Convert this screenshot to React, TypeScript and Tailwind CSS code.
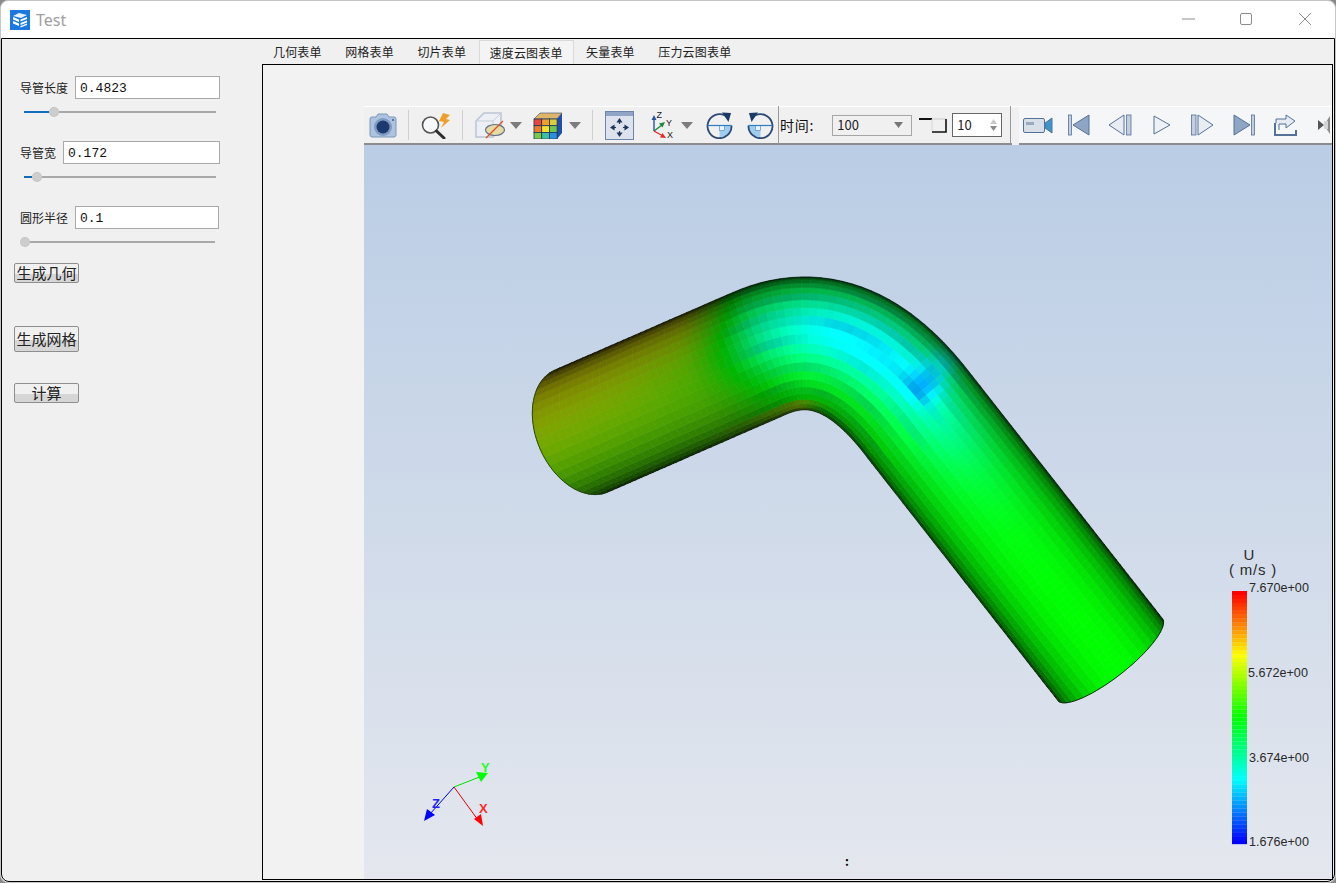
import { ReactNode } from "react";

// ---- tube mesh ----
const clamp = (v: number) => Math.max(0, Math.min(1, v));
const smooth = (a: number, b: number, v: number) => {
  const t = clamp((v - a) / (b - a));
  return t * t * (3 - 2 * t);
};

const P0 = { x: 581.5, y: 431 };
const CORNER = { x: 841.9, y: 317.4 };
const P1 = { x: 1110, y: 659.5 };
const D1 = { x: 0.917, y: -0.4 };
const D2 = { x: 0.617, y: 0.787 };
const RADIUS = 66.5;
const T1 = 90;
const T2 = 118;

const lenA = Math.hypot(CORNER.x - P0.x, CORNER.y - P0.y) - T1;
const A = { x: CORNER.x - D1.x * T1, y: CORNER.y - D1.y * T1 };
const B = { x: CORNER.x + D2.x * T2, y: CORNER.y + D2.y * T2 };
const lenC = Math.hypot(P1.x - CORNER.x, P1.y - CORNER.y) - T2;

// sample the bezier by arc length
const bend: { x: number; y: number; s: number }[] = [];
{
  let s = 0;
  let last = A;
  for (let i = 0; i <= 200; i++) {
    const t = i / 200;
    const x = (1 - t) * (1 - t) * A.x + 2 * t * (1 - t) * CORNER.x + t * t * B.x;
    const y = (1 - t) * (1 - t) * A.y + 2 * t * (1 - t) * CORNER.y + t * t * B.y;
    s += Math.hypot(x - last.x, y - last.y);
    last = { x, y };
    bend.push({ x, y, s });
  }
}
const lenB = bend[200].s;
const TOTAL = lenA + lenB + lenC;

function center(s: number) {
  if (s <= lenA) {
    return { x: A.x - D1.x * (lenA - s), y: A.y - D1.y * (lenA - s), dx: D1.x, dy: D1.y };
  }
  if (s >= lenA + lenB) {
    const r = s - lenA - lenB;
    return { x: B.x + D2.x * r, y: B.y + D2.y * r, dx: D2.x, dy: D2.y };
  }
  const q = s - lenA;
  let i = 1;
  while (i < 200 && bend[i].s < q) i++;
  const a = bend[i - 1];
  const b = bend[i];
  const l = Math.hypot(b.x - a.x, b.y - a.y) || 1;
  return { x: a.x, y: a.y, dx: (b.x - a.x) / l, dy: (b.y - a.y) / l };
}

function point(s: number, th: number) {
  const c = Math.cos(th);
  const shift =
    -45 * c * Math.max(0, 1 - s / 220) + 18 * c * Math.max(0, 1 - (TOTAL - s) / 220);
  const p = center(s + shift);
  const v = Math.sin(th) * RADIUS;
  return { x: p.x + p.dy * v, y: p.y - p.dx * v };
}

function rainbow(x: number) {
  const t = clamp(x);
  const r = clamp(4 * t - 2);
  const g = t < 0.25 ? 4 * t : t > 0.75 ? 4 - 4 * t : 1;
  const b = clamp(2 - 4 * t);
  return [r, g, b];
}

function tubeColor(s: number, th: number, px: number, py: number, seed: number) {
  const v = Math.sin(th);
  const shade = Math.pow(Math.max(Math.cos(th), 0.02), 0.8);
  const sc = lenA + lenB * 0.6;
  const wl = 1 - smooth(lenA - 60, lenA + 20, s);
  const inBend = smooth(lenA - 30, lenA + 10, s) * (1 - smooth(lenA + lenB, lenA + lenB + 60, s));
  const xLeft = Math.max(0.52, 0.67 + 0.1 * v);
  let x = xLeft * wl + 0.5 * (1 - wl);
  x -= 0.27 * Math.exp(-Math.pow((s - sc) / 140, 2)) * Math.exp(-Math.pow((v - 0.25) / 0.65, 2));
  x -= 0.12 * Math.exp(-(Math.pow(px - 925, 2) + Math.pow(py - 385, 2)) / 320);
  x -= 0.1 * Math.exp(-(Math.pow(px - 945, 2) + Math.pow(py - 362, 2)) / 260);
  if (v < -0.85) x += 0.16 * Math.exp(-Math.pow((s - lenA - 25) / 55, 2));
  const light = 0.66 + 0.34 * smooth(lenA - 50, lenA + 60, s);
  const jitter = 1 + inBend * (seed - 0.5) * 0.14;
  const [r, g, b] = rainbow(x + inBend * (seed - 0.5) * 0.03);
  const m = 255 * shade * light * jitter;
  return `rgb(${Math.min(255, Math.round(r * m))},${Math.min(255, Math.round(g * m))},${Math.min(255, Math.round(b * m))})`;
}

const BANDS = 22;
const STEPS = 110;
const quads: { pts: string; fill: string }[] = [];
for (let i = 0; i < STEPS; i++) {
  const s0 = (TOTAL * i) / STEPS;
  const s1 = (TOTAL * (i + 1)) / STEPS;
  for (let j = 0; j < BANDS; j++) {
    const a0 = -Math.PI / 2 + (Math.PI * j) / BANDS;
    const a1 = -Math.PI / 2 + (Math.PI * (j + 1)) / BANDS;
    const p = [point(s0, a0), point(s1, a0), point(s1, a1), point(s0, a1)];
    const cx = (p[0].x + p[2].x) / 2;
    const cy = (p[0].y + p[2].y) / 2;
    const h = Math.abs(Math.sin((Math.floor((i + (j % 2)) / 2) * 12.9898 + j * 78.233) * 43.5453)) % 1;
    quads.push({
      pts: p.map((q) => `${q.x.toFixed(1)},${q.y.toFixed(1)}`).join(" "),
      fill: tubeColor((s0 + s1) / 2, (a0 + a1) / 2, cx, cy, h),
    });
  }
}
const endArc = (s: number) => {
  const out: string[] = [];
  for (let j = 0; j <= 40; j++) {
    const a = -Math.PI / 2 + (Math.PI * j) / 40;
    const p = point(s, a);
    out.push(`${p.x.toFixed(1)},${p.y.toFixed(1)}`);
  }
  return out.join(" ");
};

const legendBands = Array.from({ length: 64 }, (_, i) => {
  const [r, g, b] = rainbow(1 - i / 63);
  return { y: 591 + (i * 253) / 64, fill: `rgb(${r * 255},${g * 255},${b * 255})` };
});

function Scene() {
  return (
    <svg className="absolute inset-0 w-full h-full" viewBox="364 145 968 734">
      {quads.map((q, i) => (
        <polygon key={i} points={q.pts} fill={q.fill} stroke={q.fill} strokeWidth="0.6" />
      ))}
      <polyline points={endArc(0)} fill="none" stroke="#1c3a08" strokeWidth="0.9" />
      <polyline points={endArc(TOTAL)} fill="none" stroke="#04200a" strokeWidth="0.9" />

      {legendBands.map((b, i) => (
        <rect key={i} x="1232" y={b.y} width="15" height="4.1" fill={b.fill} />
      ))}
      <g className="font-['Liberation_Sans',sans-serif]" fill="#2a2a2a">
        <text x="1249" y="560" fontSize="15" textAnchor="middle">U</text>
        <text x="1253" y="575" fontSize="15" textAnchor="middle" letterSpacing="0.8">( m/s )</text>
        <text x="1249" y="592" fontSize="12.6">7.670e+00</text>
        <text x="1248" y="677" fontSize="12.6">5.672e+00</text>
        <text x="1249" y="762" fontSize="12.6">3.674e+00</text>
        <text x="1249" y="846" fontSize="12.6">1.676e+00</text>
      </g>

      <line x1="454" y1="787" x2="482" y2="776" stroke="#00e000" strokeWidth="1" />
      <polygon points="476,772 488,773 481,782" fill="#00ff00" />
      <line x1="454" y1="787" x2="478" y2="820" stroke="#e00000" strokeWidth="1" />
      <polygon points="474,819 481,814 483,826" fill="#ff0000" />
      <line x1="454" y1="787" x2="430" y2="814" stroke="#0000e0" strokeWidth="1" />
      <polygon points="427,809 435,815 424,821" fill="#0000ff" />
      <g className="font-['Liberation_Sans',sans-serif]" fontSize="13" fontWeight="bold">
        <text x="481" y="772" fill="#22ff22">Y</text>
        <text x="479" y="813" fill="#ff2a2a">X</text>
        <text x="432" y="808" fill="#2222ff">Z</text>
      </g>
    </svg>
  );
}

// ---- toolbar icons ----
function Caret({ className }: { className: string }) {
  return (
    <svg className={className} width="12" height="7" viewBox="0 0 12 7">
      <polygon points="0,0 12,0 6,7" fill="#7c7c7c" />
    </svg>
  );
}

function Sep({ className }: { className: string }) {
  return <div className={`w-px h-[30px] bg-[#cfcfcf] ${className}`} />;
}

function CameraIcon() {
  return (
    <svg className="ml-[5px]" width="28" height="25" viewBox="0 0 28 25">
      <path d="M1 6 Q1 4 3 4 H7 L9 1 H18 L20 4 H25 Q27 4 27 6 V22 Q27 24 25 24 H3 Q1 24 1 22 Z" fill="#aec3df" stroke="#7d97bb" />
      <circle cx="14" cy="14" r="9" fill="#7f9bc2" />
      <circle cx="14" cy="14" r="6.5" fill="#1d3a70" />
      <circle cx="24" cy="7" r="1" fill="#3d5b8c" />
    </svg>
  );
}

function SearchIcon() {
  return (
    <svg className="ml-[11px]" width="31" height="27" viewBox="0 0 31 27">
      <circle cx="10.5" cy="13" r="8" fill="#f7f8fa" stroke="#555" strokeWidth="1.6" />
      <line x1="16.5" y1="19" x2="24" y2="26" stroke="#2d2d2d" strokeWidth="3" strokeLinecap="round" />
      <polygon points="23,1 30,3 26,7 30,8 21,16 24,10 19,9" fill="#ee9f2b" />
    </svg>
  );
}

function BoxIcon() {
  return (
    <svg className="ml-[11px]" width="32" height="28" viewBox="0 0 32 28">
      <path d="M2 10 L10 2 H27 V18 L19 26 H2 Z" fill="#eceff4" stroke="#bcc5d3" strokeWidth="1.5" />
      <path d="M2 10 H19 V26 M19 10 L27 2" fill="none" stroke="#c6ced9" />
      <ellipse cx="21" cy="19" rx="9.5" ry="5.5" fill="#e6d9a2" stroke="#5f6f8c" strokeWidth="1.2" />
      <line x1="12" y1="27" x2="29" y2="10" stroke="#d9502a" strokeWidth="1.3" />
    </svg>
  );
}

function ColorCubeIcon() {
  const colors = ["#e8463c", "#f0a030", "#d8cf3a", "#f07a2a", "#f7e02e", "#6cc850", "#7bc84a", "#3cc0a0", "#2a8fe0"];
  return (
    <svg className="ml-[11px]" width="30" height="27" viewBox="0 0 30 27">
      <polygon points="1,7 7,1 29,1 24,7" fill="#e0b46a" stroke="#2c4d6c" strokeWidth="0.6" />
      <polygon points="24,7 29,1 29,21 24,27" fill="#1f4fa8" />
      {colors.map((c, i) => (
        <rect key={i} x={1 + (i % 3) * 7.7} y={7 + Math.floor(i / 3) * 6.7} width="7.7" height="6.7" fill={c} stroke="#1d3557" strokeWidth="0.8" />
      ))}
    </svg>
  );
}

function FitIcon() {
  return (
    <svg className="ml-[12px]" width="29" height="29" viewBox="0 0 29 29">
      <rect x="0.5" y="0.5" width="28" height="28" fill="#dde2ec" stroke="#6d86ab" />
      <rect x="1" y="1" width="27" height="4" fill="#90a5c6" />
      <g stroke="#1f3558" strokeWidth="1.1" fill="#1f3558">
        <line x1="14.5" y1="10" x2="14.5" y2="13" />
        <line x1="14.5" y1="20" x2="14.5" y2="23" />
        <line x1="8" y1="16.5" x2="11" y2="16.5" />
        <line x1="18" y1="16.5" x2="21" y2="16.5" />
        <polygon points="14.5,8 12.5,11 16.5,11" />
        <polygon points="14.5,25 12.5,22 16.5,22" />
        <polygon points="6,16.5 9,14.5 9,18.5" />
        <polygon points="23,16.5 20,14.5 20,18.5" />
      </g>
    </svg>
  );
}

function AxesIcon() {
  return (
    <svg className="ml-[14px]" width="26" height="28" viewBox="0 0 26 28">
      <line x1="6" y1="20" x2="6" y2="7" stroke="#2456a8" strokeWidth="1.4" />
      <polygon points="6,4 3.5,9 8.5,9" fill="#2456a8" />
      <line x1="6" y1="20" x2="14" y2="14" stroke="#1f8a3c" strokeWidth="1.4" />
      <polygon points="17,11 11,12.5 14.5,16.5" fill="#1f8a3c" />
      <line x1="6" y1="20" x2="15" y2="25" stroke="#e32b2b" strokeWidth="1.4" />
      <polygon points="18,27 12,26.5 14.5,22" fill="#e32b2b" />
      <g className="font-['Liberation_Sans',sans-serif]" fontSize="9" fill="#222">
        <text x="8.5" y="7">Z</text>
        <text x="18" y="15">Y</text>
        <text x="19" y="27">X</text>
      </g>
    </svg>
  );
}

function RotIcon({ flip, className }: { flip?: boolean; className: string }) {
  return (
    <svg className={className} width="27" height="27" viewBox="0 0 27 27" style={flip ? { transform: "scaleX(-1)" } : undefined}>
      <path d="M13.5 13.5 H25.5 A12 12 0 0 1 13.5 25.5 Z" fill="#9fcdf0" />
      <rect x="13.5" y="13.5" width="5" height="5" fill="#e6f3fc" stroke="#3f85c4" strokeWidth="0.6" />
      <path d="M19 3.5 A12 12 0 1 0 25.5 13.5" fill="none" stroke="#2c4a73" strokeWidth="1.8" />
      <line x1="1.5" y1="13.5" x2="25.5" y2="13.5" stroke="#2f7fc0" strokeWidth="1.2" />
      <polygon points="16,0.5 25,1 22.5,10" fill="#1d3a66" />
    </svg>
  );
}

function StepGlyph() {
  return (
    <svg className="ml-[7px]" width="28" height="15" viewBox="0 0 28 15">
      <path d="M0 1 H13" stroke="#111" strokeWidth="2" />
      <path d="M13 1 H27" stroke="#c9c9c9" strokeWidth="1" />
      <path d="M13 1 V13" stroke="#d5d5d5" strokeWidth="1" />
      <path d="M27 1 V14 H13" stroke="#111" strokeWidth="1.6" fill="none" />
    </svg>
  );
}

const steel = "#8fa5c4";
const steelDark = "#55719a";

function VideoIcon() {
  return (
    <svg width="30" height="17" viewBox="0 0 30 17">
      <rect x="0.5" y="1.5" width="21" height="14" rx="1.5" fill="#d9dfe9" stroke={steelDark} />
      <rect x="3" y="5" width="8" height="3" fill="#9aa9bf" />
      <polygon points="22,6 29,1 29,16 22,11" fill="#3e95c9" stroke={steelDark} />
    </svg>
  );
}

function FirstIcon() {
  return (
    <svg className="ml-[15px]" width="22" height="22" viewBox="0 0 22 22">
      <rect x="0.5" y="1" width="3" height="20" fill="#c4cfde" stroke={steelDark} strokeWidth="0.8" />
      <polygon points="21,1 21,21 5,11" fill={steel} stroke={steelDark} />
    </svg>
  );
}

function PrevIcon() {
  return (
    <svg className="ml-[18px]" width="24" height="22" viewBox="0 0 24 22">
      <polygon points="16,1 16,21 1,11" fill="#e8edf4" stroke={steelDark} />
      <rect x="18.5" y="1" width="4.5" height="20" fill="#c4cfde" stroke={steelDark} strokeWidth="0.8" />
    </svg>
  );
}

function PlayIcon() {
  return (
    <svg className="ml-[21px]" width="18" height="20" viewBox="0 0 18 20">
      <polygon points="1,1 1,19 17,10" fill="#eef1f6" stroke={steelDark} />
    </svg>
  );
}

function NextIcon() {
  return (
    <svg className="ml-[20px]" width="23" height="22" viewBox="0 0 23 22">
      <rect x="0.5" y="1" width="4.5" height="20" fill="#c4cfde" stroke={steelDark} strokeWidth="0.8" />
      <polygon points="7,1 7,21 22,11" fill="#e8edf4" stroke={steelDark} />
    </svg>
  );
}

function LastIcon() {
  return (
    <svg className="ml-[19px]" width="22" height="22" viewBox="0 0 22 22">
      <polygon points="1,1 1,21 17,11" fill={steel} stroke={steelDark} />
      <rect x="18.5" y="1" width="3" height="20" fill="#c4cfde" stroke={steelDark} strokeWidth="0.8" />
    </svg>
  );
}

function ExportIcon() {
  return (
    <svg className="ml-[18px]" width="24" height="22" viewBox="0 0 24 22">
      <path d="M2 9 V21 H23 V16" fill="none" stroke={steelDark} strokeWidth="2" />
      <path d="M6 16 V10 H13 V14 L22 7 L13 1 V5 H3 V9" fill="#e6ebf3" stroke={steelDark} />
    </svg>
  );
}

function CutIcon() {
  return (
    <svg className="ml-[21px]" width="12" height="18" viewBox="0 0 12 18">
      <polygon points="0,4 6,9 0,14" fill="#555" />
      <polygon points="12,0 6,9 12,18" fill="#8a8a8a" />
      <rect x="6" y="5" width="4" height="8" fill="#d5d5d5" />
    </svg>
  );
}

function Toolbar() {
  return (
    <div className="h-[39px] shrink-0 flex bg-[#f0f0f0] border-t border-white">
      <div className="flex items-center w-[648px] border-b-2 border-[#8c8c8c]">
        <CameraIcon />
        <Sep className="ml-[11px]" />
        <SearchIcon />
        <Sep className="ml-[11px]" />
        <BoxIcon />
        <Caret className="ml-[4px]" />
        <ColorCubeIcon />
        <Caret className="ml-[6px]" />
        <Sep className="ml-[11px]" />
        <FitIcon />
        <AxesIcon />
        <Caret className="ml-[7px]" />
        <RotIcon className="ml-[13px]" />
        <RotIcon flip className="ml-[14px]" />
        <div className="ml-[4px] w-px h-[38px] bg-[#9a9a9a]" />
        <span className="ml-[1px] text-[14px] tracking-[0.8px] text-[#111]">时间:</span>
        <div className="ml-[18px] w-[80px] h-[21px] border border-[#a6a6a6] flex items-center justify-between pl-[4px] pr-[8px] text-[13px] text-[#222]">
          <span>100</span>
          <svg width="9" height="6" viewBox="0 0 9 6"><polygon points="0,0 9,0 4.5,6" fill="#777" /></svg>
        </div>
        <StepGlyph />
        <div className="ml-[5px] w-[50px] h-[24px] border border-[#666] bg-white flex items-center justify-between pl-[4px] pr-[4px] text-[13px] text-[#222]">
          <span>10</span>
          <svg width="7" height="14" viewBox="0 0 7 14">
            <polygon points="3.5,1 7,6 0,6" fill="#c8c8c8" />
            <polygon points="0,8 7,8 3.5,13" fill="#8a8a8a" />
          </svg>
        </div>
        <div className="ml-[8px] w-px h-[38px] bg-[#9a9a9a]" />
      </div>
      <div className="w-[7px] bg-[#f0f0f0]" />
      <div className="flex-1 flex items-center pl-[4px] border-b-2 border-[#8c8c8c] bg-[#f5f6f8]">
        <VideoIcon />
        <FirstIcon />
        <PrevIcon />
        <PlayIcon />
        <NextIcon />
        <LastIcon />
        <ExportIcon />
        <CutIcon />
      </div>
    </div>
  );
}

// ---- left panel ----
function Field({ label, value, gap, inputW }: { label: string; value: string; gap: string; inputW: string }) {
  return (
    <div className="flex items-center h-[23px] pl-[18px]">
      <span className="text-[12px] text-[#222] whitespace-nowrap">{label}</span>
      <div className={`${gap} ${inputW} h-[23px] bg-white border border-[#a9a9a9] flex items-center pl-[4px] pt-[2px] text-[13px] text-[#111] font-['Liberation_Mono',monospace]`}>
        {value}
      </div>
    </div>
  );
}

function Slider({ className, fill, total }: { className: string; fill: string; total: string }) {
  return (
    <div className={`flex items-center h-[10px] mt-[8px] ${className} ${total}`}>
      <div className={`h-[2px] bg-[#0f6cbd] ${fill}`} />
      <div className="w-[10px] h-[10px] rounded-full bg-[#cdcdcd] border border-dotted border-[#bdbdbd]" />
      <div className="h-[2px] flex-1 bg-[#a9a9a9]" />
    </div>
  );
}

function Btn({ children, className }: { children: ReactNode; className: string }) {
  return (
    <div className={`ml-[12px] w-[65px] flex items-center justify-center rounded-[2px] border border-[#8e8e8e] bg-[linear-gradient(#f0f0f0_0%,#f0f0f0_55%,#d6d6d6_56%,#d6d6d6_100%)] text-[15px] text-[#222] whitespace-nowrap ${className}`}>
      {children}
    </div>
  );
}

function Sidebar() {
  return (
    <div className="w-[260px] shrink-0 pt-[37px] flex flex-col">
      <Field label="导管长度" value="0.4823" gap="ml-[7px]" inputW="w-[145px]" />
      <Slider className="ml-[22px]" total="w-[192px]" fill="w-[25px]" />
      <div className="h-[24px]" />
      <Field label="导管宽" value="0.172" gap="ml-[7px]" inputW="w-[157px]" />
      <Slider className="ml-[22px]" total="w-[192px]" fill="w-[8px]" />
      <div className="h-[24px]" />
      <Field label="圆形半径" value="0.1" gap="ml-[7px]" inputW="w-[144px]" />
      <Slider className="ml-[18px]" total="w-[195px]" fill="w-0" />
      <Btn className="h-[20px] mt-[16px]">生成几何</Btn>
      <Btn className="h-[26px] mt-[43px]">生成网格</Btn>
      <Btn className="h-[20px] mt-[31px]">计算</Btn>
    </div>
  );
}

// ---- tabs ----
const TABS = ["几何表单", "网格表单", "切片表单", "速度云图表单", "矢量表单", "压力云图表单"];

function Tabs() {
  return (
    <div className="h-[25px] shrink-0 pt-px flex gap-[1.5px] text-[12px] tracking-[0.17px] text-[#222]">
      {TABS.map((t) => (
        <div
          key={t}
          className={
            t === "速度云图表单"
              ? "h-[24px] px-[10px] flex items-center border-x border-t border-[#d9d9d9] bg-[#f4f4f4]"
              : "h-[24px] px-[11px] flex items-center"
          }
        >
          {t}
        </div>
      ))}
    </div>
  );
}

function AppIcon() {
  return (
    <svg className="ml-[9px]" width="20" height="20" viewBox="0 0 20 20">
      <rect width="20" height="20" fill="#1a78e0" />
      <path d="M3 6 L9 3 L17 5 L11 8 Z" fill="#e8f2fd" />
      <path d="M3 7 L9 9.5 V12 L3 9.5 Z M3 11 L9 13.5 V16 L3 13.5 Z" fill="#fff" />
      <path d="M10.5 9.5 L17 7 V9 L10.5 11.5 Z M10.5 13 L17 10.5 V12.5 L10.5 15 Z M10.5 16 L17 13.5 V15 L10.5 17.5 Z" fill="#fff" />
    </svg>
  );
}

export default function App() {
  return (
    <div className="h-screen w-full bg-[#8a8a8a] overflow-hidden font-['Noto_Sans_CJK_SC','Noto_Sans',sans-serif]">
      <div className="h-[883px] rounded-lg bg-white border border-[#c6c6c6] flex flex-col">
        <div className="h-[37px] shrink-0 flex items-center">
          <AppIcon />
          <span className="ml-[6px] text-[16px] text-[#a0a0a0] font-['Noto_Sans',sans-serif]">Test</span>
          <div className="ml-auto flex items-center pb-[1px]">
            <svg width="13" height="2" viewBox="0 0 13 2"><line x1="0" y1="1" x2="13" y2="1" stroke="#8c8c8c" /></svg>
            <svg className="ml-[45px]" width="12" height="12" viewBox="0 0 12 12"><rect x="0.5" y="0.5" width="11" height="11" rx="1.5" fill="none" stroke="#8c8c8c" /></svg>
            <svg className="ml-[47px] mr-[24px]" width="12" height="12" viewBox="0 0 12 12"><path d="M0 0 L12 12 M12 0 L0 12" stroke="#8c8c8c" /></svg>
          </div>
        </div>
        <div className="flex-1 min-h-0 flex border border-black rounded-b-lg bg-[#f0f0f0]">
          <Sidebar />
          <div className="flex-1 min-w-0 flex flex-col pr-px pb-px">
            <Tabs />
            <div className="flex-1 min-h-0 border border-black bg-[#f2f2f2] pl-[101px] pt-[41px] flex">
              <div className="flex-1 min-w-0 flex flex-col">
                <Toolbar />
                <div className="relative flex-1 min-h-0 bg-[linear-gradient(#bacde5,#e4e7ee)]">
                  <Scene />
                  <span className="absolute left-[481px] top-[710px] text-[12px] font-bold leading-none text-black">:</span>
                </div>
              </div>
            </div>
          </div>
        </div>
      </div>
    </div>
  );
}
